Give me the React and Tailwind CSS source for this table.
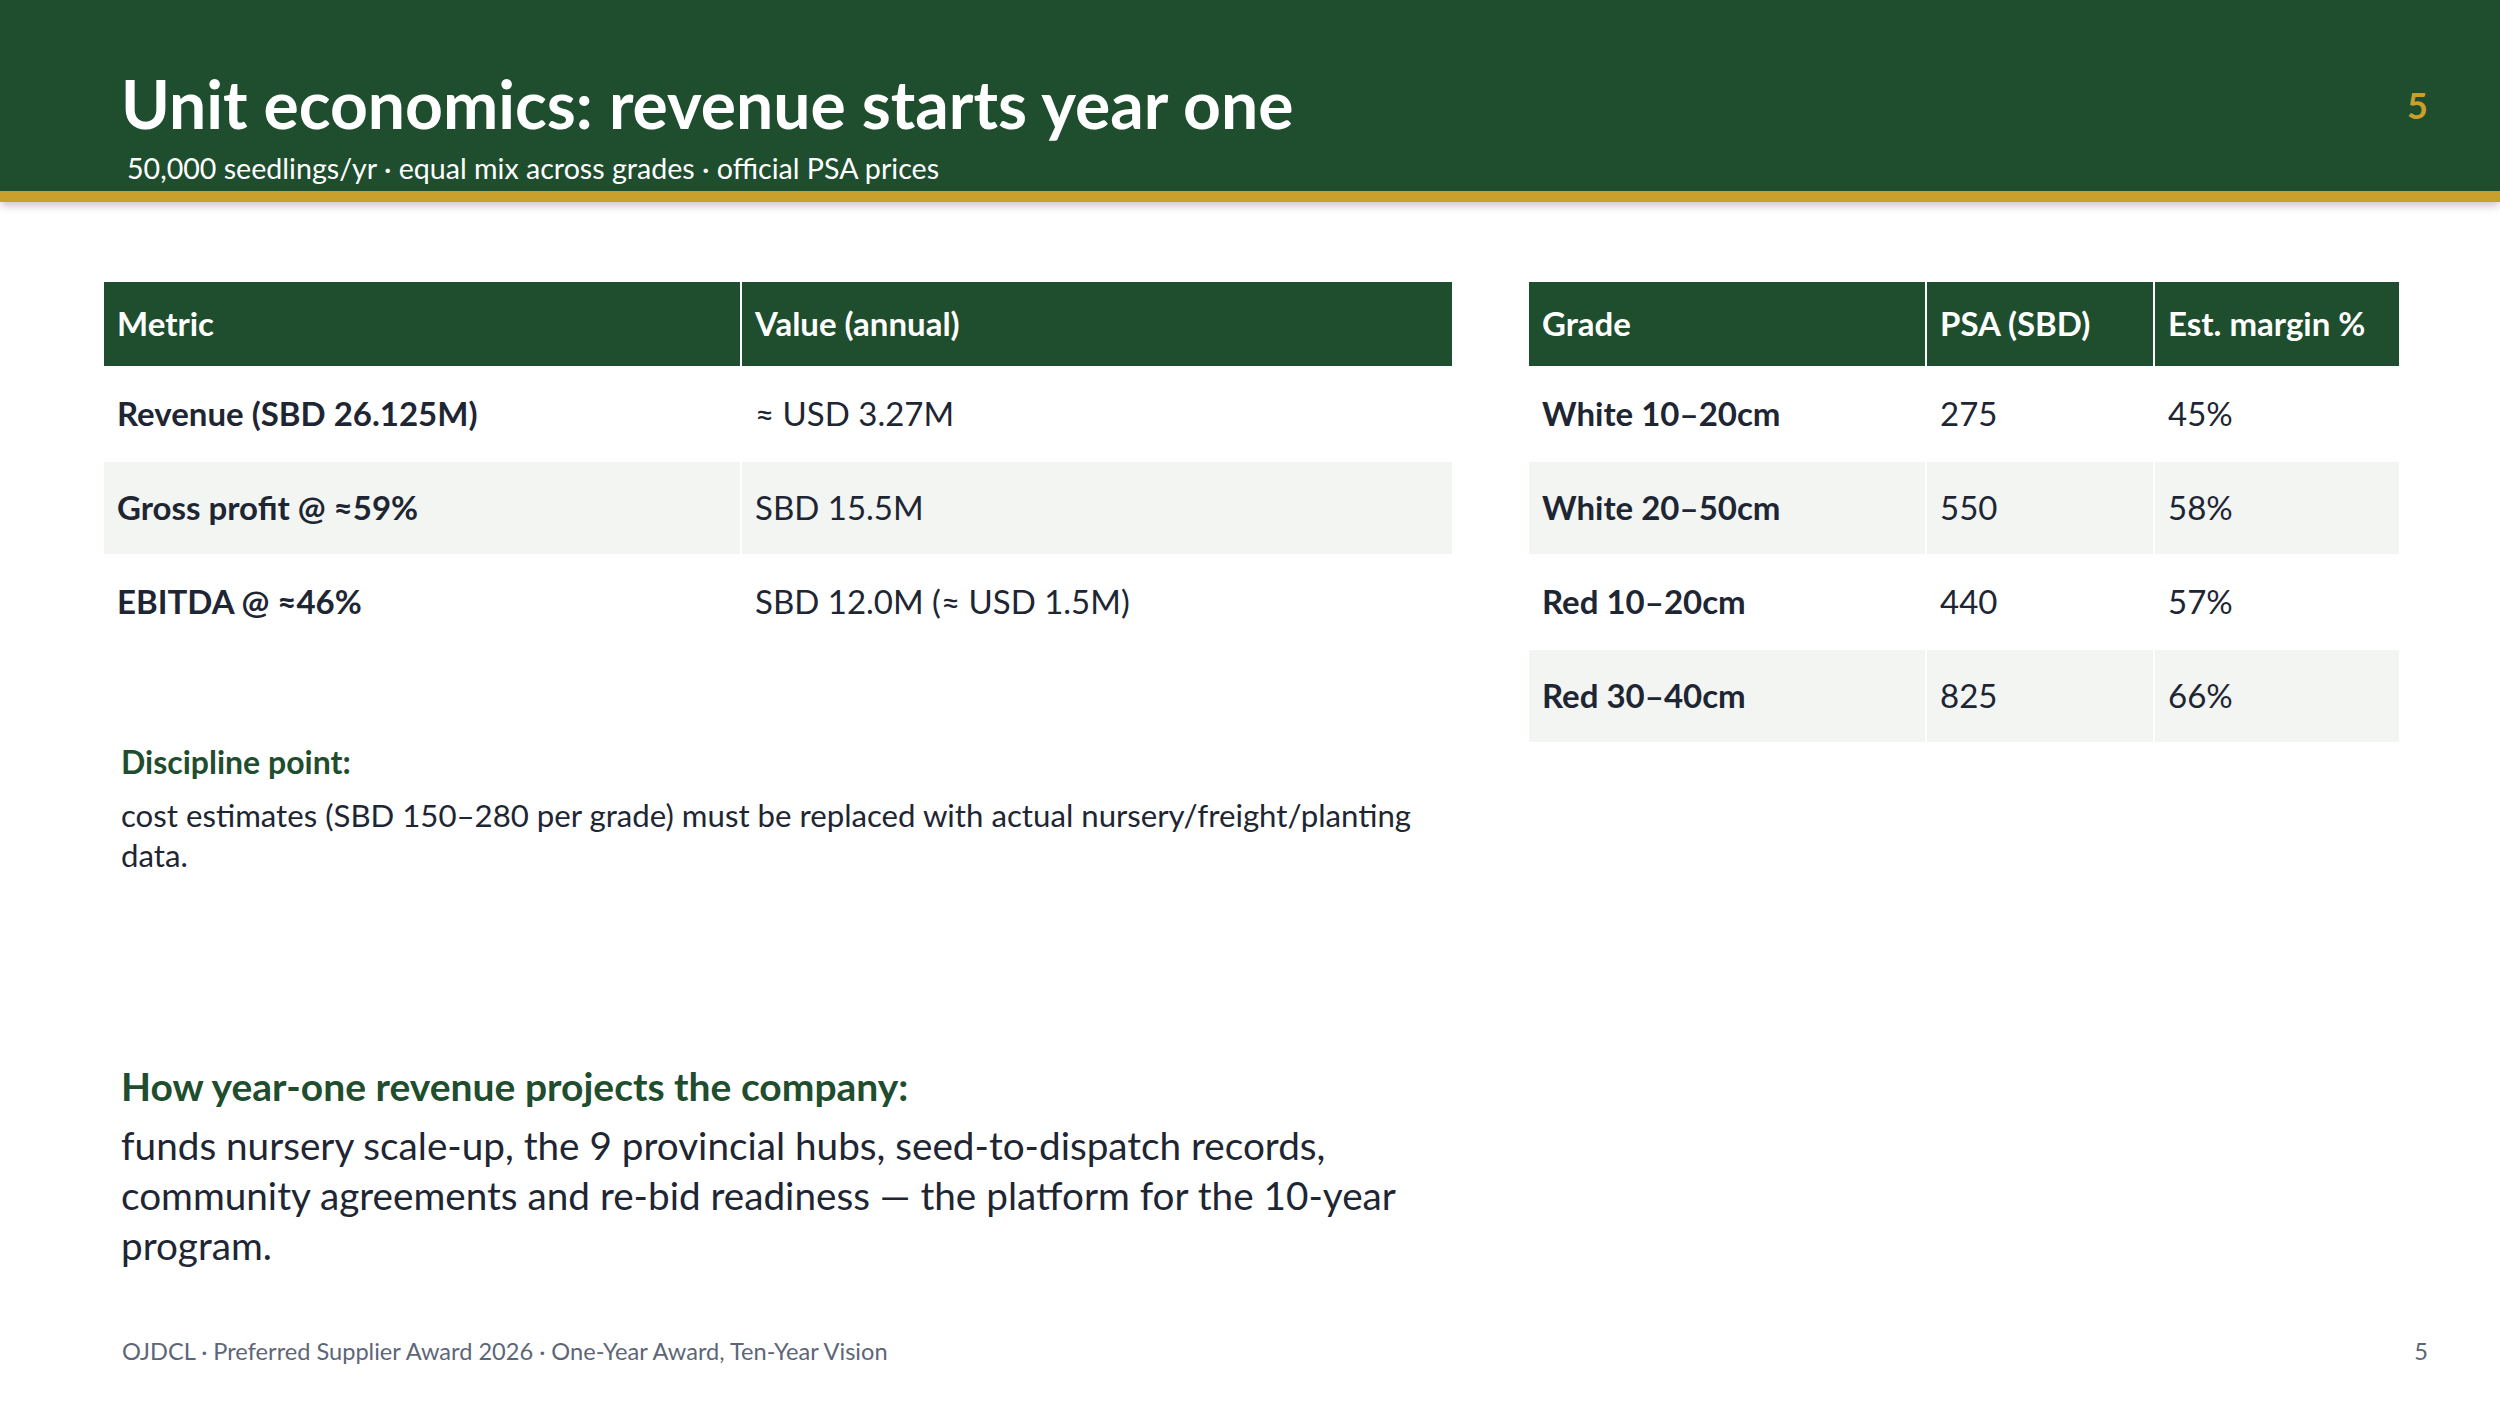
const GREEN = "bg-[#1f4e2e]";

const metrics = [
  { label: "Revenue (SBD 26.125M)", value: "≈ USD 3.27M" },
  { label: "Gross profit @ ≈59%", value: "SBD 15.5M" },
  { label: "EBITDA @ ≈46%", value: "SBD 12.0M (≈ USD 1.5M)" },
];

const grades = [
  { grade: "White 10–20cm", psa: "275", margin: "45%" },
  { grade: "White 20–50cm", psa: "550", margin: "58%" },
  { grade: "Red 10–20cm", psa: "440", margin: "57%" },
  { grade: "Red 30–40cm", psa: "825", margin: "66%" },
];

function HeadCell({ children, w }) {
  return (
    <div className={`${w} ${GREEN} h-full flex items-center px-[13px] text-white font-bold`}>
      {children}
    </div>
  );
}

function Cell({ children, w, bold, shade }) {
  return (
    <div
      className={`${w} h-full flex items-center px-[13px] ${shade ? "bg-[#f3f5f2]" : "bg-white"} ${bold ? "font-bold" : ""}`}
    >
      {children}
    </div>
  );
}

function MetricTable() {
  return (
    <div className="flex flex-col gap-[2px] text-[33px] text-[#1e2634]">
      <div className="flex gap-[2px] h-[84px]">
        <HeadCell w="w-[636px]">Metric</HeadCell>
        <HeadCell w="w-[710px]">Value (annual)</HeadCell>
      </div>
      {metrics.map((m, i) => (
        <div key={m.label} className="flex gap-[2px] h-[92px]">
          <Cell w="w-[636px]" bold shade={i % 2 === 1}>{m.label}</Cell>
          <Cell w="w-[710px]" shade={i % 2 === 1}>{m.value}</Cell>
        </div>
      ))}
    </div>
  );
}

function GradeTable() {
  return (
    <div className="flex flex-col gap-[2px] text-[33px] text-[#1e2634]">
      <div className="flex gap-[2px] h-[84px]">
        <HeadCell w="w-[396px]">Grade</HeadCell>
        <HeadCell w="w-[226px]">PSA (SBD)</HeadCell>
        <HeadCell w="w-[244px]">Est. margin %</HeadCell>
      </div>
      {grades.map((g, i) => (
        <div key={g.grade} className="flex gap-[2px] h-[92px]">
          <Cell w="w-[396px]" bold shade={i % 2 === 1}>{g.grade}</Cell>
          <Cell w="w-[226px]" shade={i % 2 === 1}>{g.psa}</Cell>
          <Cell w="w-[244px]" shade={i % 2 === 1}>{g.margin}</Cell>
        </div>
      ))}
    </div>
  );
}

export default function App() {
  return (
    <div
      className="w-[2500px] h-[1406px] bg-white flex flex-col overflow-hidden"
      style={{ fontFamily: "Lato, 'Noto Sans', sans-serif" }}
    >
      {/* header band */}
      <div className="relative z-10 shadow-[0_5px_8px_-1px_rgba(0,0,0,0.22)]">
        <div className={`${GREEN} h-[191px] flex justify-between pl-[121px] pr-[72px] pt-[71px]`}>
          <div className="flex flex-col">
            <h1 className="text-[66px] leading-none font-bold text-white">
              Unit economics: revenue starts year one
            </h1>
            <p className="mt-[17px] ml-[6px] text-[28.6px] leading-none text-white">
              50,000 seedlings/yr · equal mix across grades · official PSA prices
            </p>
          </div>
          <span className="mt-[16px] text-[36px] leading-none font-bold text-[#c9a02b]">5</span>
        </div>
        <div className="h-[11px] bg-[#c9a02b]" />
      </div>

      {/* body */}
      <div className="flex pt-[80px] pl-[104px] gap-[77px]">
        <div className="w-[1348px] flex flex-col">
          <MetricTable />

          <div className="mt-[98px] pl-[17px] pr-[16px]">
            <h3 className="text-[32px] leading-none font-bold text-[#1f4e2e]">Discipline point:</h3>
            <p className="mt-[17px] text-[31.2px] leading-[40px] text-[#1e2634]">
              cost estimates (SBD 150–280 per grade) must be replaced with actual nursery/freight/planting data.
            </p>
          </div>

          <div className="mt-[192px] pl-[17px] pr-[16px]">
            <h3 className="text-[39px] leading-none font-bold text-[#1f4e2e]">
              How year-one revenue projects the company:
            </h3>
            <p className="mt-[14px] text-[38.7px] leading-[50px] text-[#1e2634]">
              funds nursery scale-up, the 9 provincial hubs, seed-to-dispatch records, community agreements and re-bid readiness — the platform for the 10-year program.
            </p>
          </div>
        </div>

        <div className="w-[870px]">
          <GradeTable />
        </div>
      </div>

      {/* footer */}
      <div className="mt-auto pb-[42px] pl-[122px] pr-[72px] flex justify-between text-[23.6px] leading-none text-[#5d6677]">
        <span>OJDCL · Preferred Supplier Award 2026 · One-Year Award, Ten-Year Vision</span>
        <span>5</span>
      </div>
    </div>
  );
}
